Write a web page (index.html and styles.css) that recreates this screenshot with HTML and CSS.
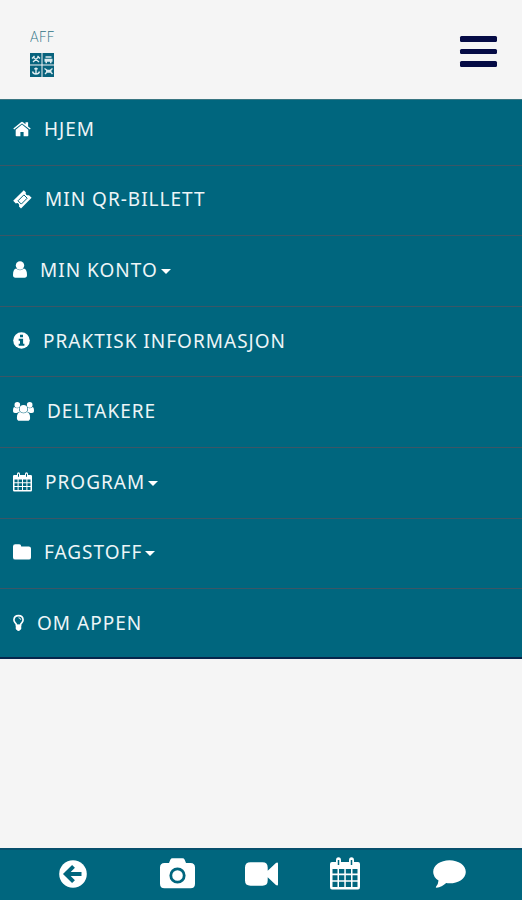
FILE: index.html
```html
<!DOCTYPE html>
<html lang="no">
<head>
  <meta charset="UTF-8" />
  <meta name="viewport" content="width=device-width, initial-scale=1.0"/>
  <title>AFF</title>
  <link rel="stylesheet" href="styles.css">
</head>
<body>
  <header class="topbar">
    <a class="logo" href="#">
      <span class="logo-text">AFF</span>
      <svg width="24" height="24" viewBox="0 0 24 24">
        <path fill="#08637d" d="M0 0h11.5v11.5H0zM12.5 0H24v11.5H12.5zM0 12.5h11.5V24H0zM12.5 12.5H24V24H12.5z"/>
        <g fill="none" stroke="#dcebef" stroke-width="1.4">
          <path d="M3 9l6-5.500M3 4l6 5M2 5.500l2.500-2.500M7.500 3l2.500 2.500"/>
          <path d="M15.500 4h6M14.500 6.500h8M14.500 8h8M15.500 9.500h1.500M20 9.500h1.500"/>
          <path d="M6 14.500v6M4.300 15.700h3.400M2.500 18.500q.5 2.500 3.500 2.500t3.500-2.500"/>
          <path d="M14.500 15.500l3 2h2.500l2.500-2M15 21l2.500-2.500h2.500l2.500 2.500M16 18h5.500M16.500 19h4.500"/>
        </g>
      </svg>
    </a>
    <button class="menu-btn" type="button" aria-label="Meny"><span></span><span></span><span></span></button>
  </header>

  <nav class="menu">
    <a href="#">
      <svg width="18" height="16" viewBox="0 0 18 16">
        <path d="M9 3.500L2.700 8.700V14.500q0 .8.8.8H7.400V11h3.200v4.300h3.900q.8 0 .8-.8V8.700z"/>
        <path d="M.3 7.600L8 1.200q1-.8 2 0l2.500 2.100V1.200h2.600v4.200l2.600 2.200-.9 1L9 2.400 1.200 8.600z"/>
      </svg>
      <span>HJEM</span>
    </a>
    <a href="#">
      <svg width="19" height="19" viewBox="0 0 19 19">
        <path d="M.2 10.800L10.800.2l2 2q-.5 1.500.5 2.500t2.700.5l2.600 2.600L8 18.400l-2-2q.6-1.700-.4-2.700t-2.800-.3z"/>
        <path class="cut thin" d="M5 10.800L10.900 4.900l3.300 3.300-5.900 5.900z"/>
      </svg>
      <span>MIN QR-BILLETT</span>
    </a>
    <a href="#">
      <svg width="14" height="17" viewBox="0 0 14 17">
        <circle cx="7" cy="4.500" r="4.200"/>
        <path d="M3.200 7.500q3.800 3.400 7.600 0Q14 8 14 14q0 2.700-2.500 2.700h-9Q0 16.700 0 14 0 8 3.200 7.500z"/>
      </svg>
      <span>MIN KONTO</span><i class="caret"></i>
    </a>
    <a href="#">
      <svg width="17" height="17" viewBox="0 0 17 17">
        <circle cx="8.500" cy="8.500" r="8.300"/>
        <path class="hole" d="M7 2.700h3v2.500H7zM5.700 6.700h4.400v5.100h1.300v2H5.700v-2H7V8.700H5.700z"/>
      </svg>
      <span>PRAKTISK INFORMASJON</span>
    </a>
    <a href="#">
      <svg width="21" height="19" viewBox="0 0 21 19">
        <circle cx="4.300" cy="2.900" r="2.800"/>
        <circle cx="16.700" cy="2.900" r="2.800"/>
        <path d="M1.200 5q3 2 5 .6Q5.500 8 7 9.800 4.900 10 4 11H2Q0 11 0 9.300 0 5.500 1.200 5zM19.800 5q-3 2-5 .6.700 2.400-.8 4.200 2.100.2 3 1.200h2q2 0 2-1.700 0-3.800-1.200-4.300z"/>
        <circle cx="10.500" cy="6.800" r="3.900"/>
        <path d="M7.200 9.900q3.300 2.700 6.600 0 3.300.6 3.300 6 0 2.800-2.600 2.800h-8q-2.600 0-2.600-2.800 0-5.400 3.300-6z"/>
      </svg>
      <span>DELTAKERE</span>
    </a>
    <a href="#">
      <svg width="19" height="20" viewBox="0 0 19 20">
        <path fill-rule="evenodd" d="M1.200 3H4V2q0-1.700 1.500-1.700T7 2v1h5V2q0-1.700 1.500-1.700T15 2v1h2.800q1.200 0 1.200 1.200v14q0 1.300-1.200 1.300H1.200Q0 19.500 0 18.200v-14Q0 3 1.200 3zM1.500 7.500v2.700h3.100V7.500zM5.600 7.500v2.700h3.400V7.500zM10 7.500v2.700h3.400V7.500zM14.400 7.500v2.700h3.100V7.500zM1.500 11.200V14h3.100v-2.800zM5.600 11.200V14H9v-2.800zM10 11.200V14h3.400v-2.800zM14.400 11.200V14h3.100v-2.800zM1.500 15v3h3.100v-3zM5.600 15v3H9v-3zM10 15v3h3.400v-3zM14.400 15v3h3.100v-3z"/>
        <path class="cut thin" d="M5.500 1.800v3M13.500 1.800v3"/>
      </svg>
      <span>PROGRAM</span><i class="caret"></i>
    </a>
    <a href="#">
      <svg width="18" height="16" viewBox="0 0 18 16">
        <path d="M2.300.2H6.200Q8.200.2 8.200 2.400H15.800Q18 2.400 18 4.600V13.400Q18 15.600 15.800 15.600H2.300Q0 15.600 0 13.400V2.500Q0 .2 2.300.2z"/>
      </svg>
      <span>FAGSTOFF</span><i class="caret"></i>
    </a>
    <a href="#">
      <svg width="11" height="18" viewBox="0 0 12 18">
        <path class="line" d="M3.900 11.500Q3.700 9.800 2.300 8.600 1 7.200 1 5.500 1.300 1 6 1t5 4.500q0 1.700-1.300 3.100-1.400 1.200-1.600 2.900z"/>
        <path class="line thin" d="M6 3.300q2.300.2 2.500 2.200"/>
        <path d="M3 10.800h6v4.600q0 1-1.300 1.300Q7.300 17.800 6 17.800t-1.700-1.100Q3 16.400 3 15.400z"/>
      </svg>
      <span>OM APPEN</span>
    </a>
  </nav>

  <footer class="bottombar">
    <a href="#" aria-label="Tilbake">
      <svg width="28" height="28" viewBox="0 0 28 28">
        <circle cx="14" cy="14" r="13.800"/>
        <path class="arrow" d="M14.500 6.300L6.800 14l7.700 7.700M7.500 14H22.500"/>
      </svg>
    </a>
    <a href="#" aria-label="Kamera">
      <svg width="35" height="31" viewBox="0 0 35 31">
        <path d="M4.500 5H9l1.300-3.300Q11 .3 12.500.3h10q1.500 0 2.200 1.400L26 5h4.500Q35 5 35 9.500v16.300q0 4.500-4.500 4.500h-26Q0 30.300 0 25.800V9.500Q0 5 4.500 5z"/>
        <circle class="ring" cx="17.500" cy="17.500" r="6.700"/>
      </svg>
    </a>
    <a href="#" aria-label="Video">
      <svg width="33" height="24" viewBox="0 0 33 24">
        <path d="M5.500.3h12q5.200 0 5.200 5.200v3.300l8.200-7.900Q33 .1 33 1.500v21q0 1.400-2.100.6l-8.200-7.900v3.300q0 5.200-5.200 5.200h-12Q0 23.700 0 18.500v-13Q0 .3 5.500.3z"/>
      </svg>
    </a>
    <a href="#" aria-label="Program">
      <svg width="30" height="33" viewBox="0 0 30 33">
        <path fill-rule="evenodd" d="M2 5h4V3.500Q6 .3 8.500.3T11 3.500V5h8V3.500Q19 .3 21.500.3T24 3.500V5h4q2 0 2 2v23q0 2.500-2 2.500H2Q0 32.500 0 30V7q0-2 2-2zM2.500 12v4.500h5V12zM9 12v4.500h5.300V12zM15.800 12v4.500H21V12zM22.500 12v4.500h5V12zM2.500 18.200v5h5v-5zM9 18.200v5h5.300v-5zM15.800 18.200v5H21v-5zM22.500 18.200v5h5v-5zM2.500 24.800V30h5v-5.200zM9 24.800V30h5.300v-5.200zM15.800 24.800V30H21v-5.200zM22.500 24.800V30h5v-5.200z"/>
        <path class="cut" d="M8.500 3v5M21.500 3v5"/>
      </svg>
    </a>
    <a href="#" aria-label="Chat">
      <svg width="33" height="28" viewBox="0 0 33 28">
        <path d="M16.500.3C25.500.3 32.800 5.400 32.800 11.900S25.500 23.300 16.500 23.300q-1.700 0-3.300-.3-4.300 4-9.700 4.700-.8 0-.7-.8 2.500-2.300 2.700-6.400Q.2 17 .2 11.900C.2 5.400 7.500.3 16.500.3z"/>
      </svg>
    </a>
  </footer>
</body>
</html>
```
FILE: styles.css
```css
* {
  box-sizing: border-box;
}
body {
  margin: 0;
  height: 900px;
  display: flex;
  flex-direction: column;
  background: #f5f5f5;
  font-family: "Noto Sans", "Open Sans", sans-serif;
}
.topbar {
  height: 99px;
  display: flex;
  justify-content: space-between;
  align-items: flex-start;
  padding: 28px 25px 0 30px;
}
.logo {
  display: flex;
  flex-direction: column;
  gap: 9px;
  width: 24px;
  text-decoration: none;
}
.logo-text {
  font-family: Lato, sans-serif;
  font-weight: 300;
  font-size: 16px;
  line-height: 16px;
  letter-spacing: 0.5px;
  color: #2c7184;
  transform: scaleX(0.82);
  transform-origin: left;
}
.menu-btn {
  display: flex;
  flex-direction: column;
  gap: 7px;
  margin-top: 8px;
  padding: 0;
  border: 0;
  background: none;
}
.menu-btn span {
  width: 37px;
  height: 5.500px;
  border-radius: 1.5px;
  background: #050b45;
}
.menu {
  height: 560px;
  background: #00667e;
  border-top: 1px solid #397581;
  border-bottom: 2px solid #06264c;
}
.menu a {
  display: flex;
  align-items: center;
  height: 70.6px;
  padding: 0 13px 2px;
  border-bottom: 1px solid #3b5666;
  color: #edf5f7;
  font-size: 19px;
  letter-spacing: 1px;
  text-decoration: none;
}
.menu a:first-child {
  height: 65.600px;
  padding-bottom: 7px;
}
.menu a:last-child {
  height: 69px;
  border-bottom: 0;
}
.menu svg {
  margin-right: 13px;
}
svg {
  display: block;
  fill: #fff;
}
.caret {
  margin-left: 3px;
  margin-top: 3px;
  border: 5px solid transparent;
  border-top-color: #fff;
  border-bottom: 0;
}
.hole {
  fill: #00667e;
}
.cut,
.arrow,
.ring {
  fill: none;
  stroke: #00667e;
  stroke-width: 1.5;
}
.line {
  fill: none;
  stroke: #fff;
  stroke-width: 1.8;
}
.thin {
  stroke-width: 1;
}
.arrow {
  stroke-width: 4;
}
.ring {
  stroke-width: 2.8;
}
.bottombar {
  display: flex;
  align-items: center;
  height: 52px;
  margin-top: auto;
  padding: 0 56px 3px 59px;
  background: #00667e;
  border-top: 2px solid #07506d;
}
.bottombar a:nth-child(2) {
  margin-left: 73px;
}
.bottombar a:nth-child(3) {
  margin-left: 50px;
}
.bottombar a:nth-child(4) {
  margin-left: 52px;
}
.bottombar a:nth-child(5) {
  margin-left: auto;
}
```
